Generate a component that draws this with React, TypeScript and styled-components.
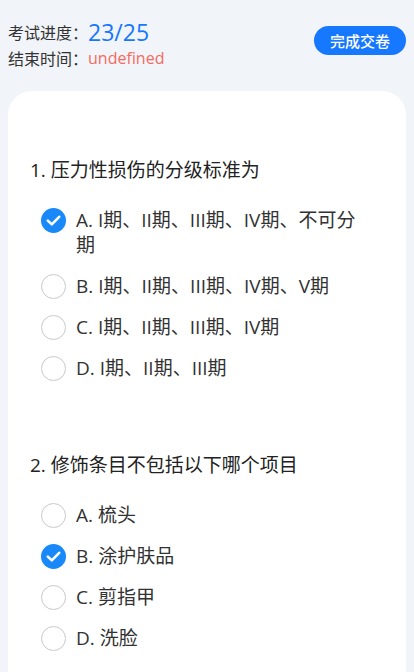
import React, { useState } from "react"
import styled, { createGlobalStyle } from "styled-components"

const GlobalStyle = createGlobalStyle`
  html, body {
    margin: 0;
    padding: 0;
    background: #f1f4f9;
    font-family: "Open Sans", "Noto Sans CJK SC", sans-serif;
    color: #323233;
  }
`

const questions = [
  {
    title: "1. 压力性损伤的分级标准为",
    options: [
      "A. I期、II期、III期、IV期、不可分期",
      "B. I期、II期、III期、IV期、V期",
      "C. I期、II期、III期、IV期",
      "D. I期、II期、III期",
    ],
    answer: 0,
  },
  {
    title: "2. 修饰条目不包括以下哪个项目",
    options: ["A. 梳头", "B. 涂护肤品", "C. 剪指甲", "D. 洗脸"],
    answer: 1,
  },
]

const Page = styled.div`
  min-height: 100vh;
`

const Header = styled.div`
  display: flex;
  justify-content: space-between;
  align-items: flex-start;
  padding: 17px 8px 0 8px;
`

const Info = styled.div`
  display: flex;
  flex-direction: column;
`

const InfoLine = styled.div<{ $tall?: boolean }>`
  display: flex;
  align-items: center;
  height: ${(p) => (p.$tall ? "30px" : "22px")};
`

const Label = styled.span`
  font-size: 16px;
  color: #333;
`

const Value = styled.span<{ $color: string; $size: number }>`
  color: ${(p) => p.$color};
  font-size: ${(p) => p.$size}px;
`

const SubmitButton = styled.button`
  margin-top: 9px;
  width: 92px;
  height: 29px;
  border: none;
  border-radius: 15px;
  background: #1677ff;
  color: #fff;
  font-size: 15px;
  font-family: inherit;
  font-weight: 500;
  padding: 0;
`

const Card = styled.div`
  margin: 22px 8px 0 8px;
  background: #fff;
  border-radius: 24px 24px 0 0;
  padding: 67px 22px 40px 22px;
  min-height: 600px;
  display: flex;
  flex-direction: column;
  gap: 64px;
`

const Question = styled.div`
  display: flex;
  flex-direction: column;
`

const Title = styled.div`
  font-size: 19px;
  line-height: 25px;
  color: #222;
  margin-bottom: 17px;
`

const Options = styled.div`
  display: flex;
  flex-direction: column;
  padding: 0 11px;
`

const Option = styled.label`
  display: flex;
  align-items: flex-start;
  gap: 10px;
  padding: 8px 0;
  cursor: pointer;
`

const OptionText = styled.span`
  font-size: 19px;
  line-height: 25px;
  color: #323233;
`

const Radio = styled.span<{ $checked: boolean }>`
  flex: none;
  width: 25px;
  height: 25px;
  box-sizing: border-box;
  border-radius: 50%;
  border: ${(p) => (p.$checked ? "none" : "1px solid #c8c9cc")};
  background: ${(p) => (p.$checked ? "#1989fa" : "#fff")};
  display: flex;
  align-items: center;
  justify-content: center;
`

const CheckMark = () => (
  <svg width="25" height="25" viewBox="0 0 25 25">
    <path d="M6.8 12.6 L10.8 16.4 L18.2 8.8" fill="none" stroke="#fff" strokeWidth="2.6" strokeLinecap="round" strokeLinejoin="round" />
  </svg>
)

export default function App() {
  const [answers, setAnswers] = useState(questions.map((q) => q.answer))

  return (
    <Page>
      <GlobalStyle />
      <Header>
        <Info>
          <InfoLine $tall>
            <Label>考试进度：</Label>
            <Value $color="#1677ff" $size={23}>23/25</Value>
          </InfoLine>
          <InfoLine>
            <Label>结束时间：</Label>
            <Value $color="#f46b5f" $size={16}>undefined</Value>
          </InfoLine>
        </Info>
        <SubmitButton>完成交卷</SubmitButton>
      </Header>
      <Card>
        {questions.map((q, qi) => (
          <Question key={qi}>
            <Title>{q.title}</Title>
            <Options>
              {q.options.map((o, oi) => {
                const checked = answers[qi] === oi
                return (
                  <Option
                    key={oi}
                    onClick={() => setAnswers(answers.map((a, i) => (i === qi ? oi : a)))}
                  >
                    <Radio $checked={checked}>{checked && <CheckMark />}</Radio>
                    <OptionText>{o}</OptionText>
                  </Option>
                )
              })}
            </Options>
          </Question>
        ))}
      </Card>
    </Page>
  )
}
